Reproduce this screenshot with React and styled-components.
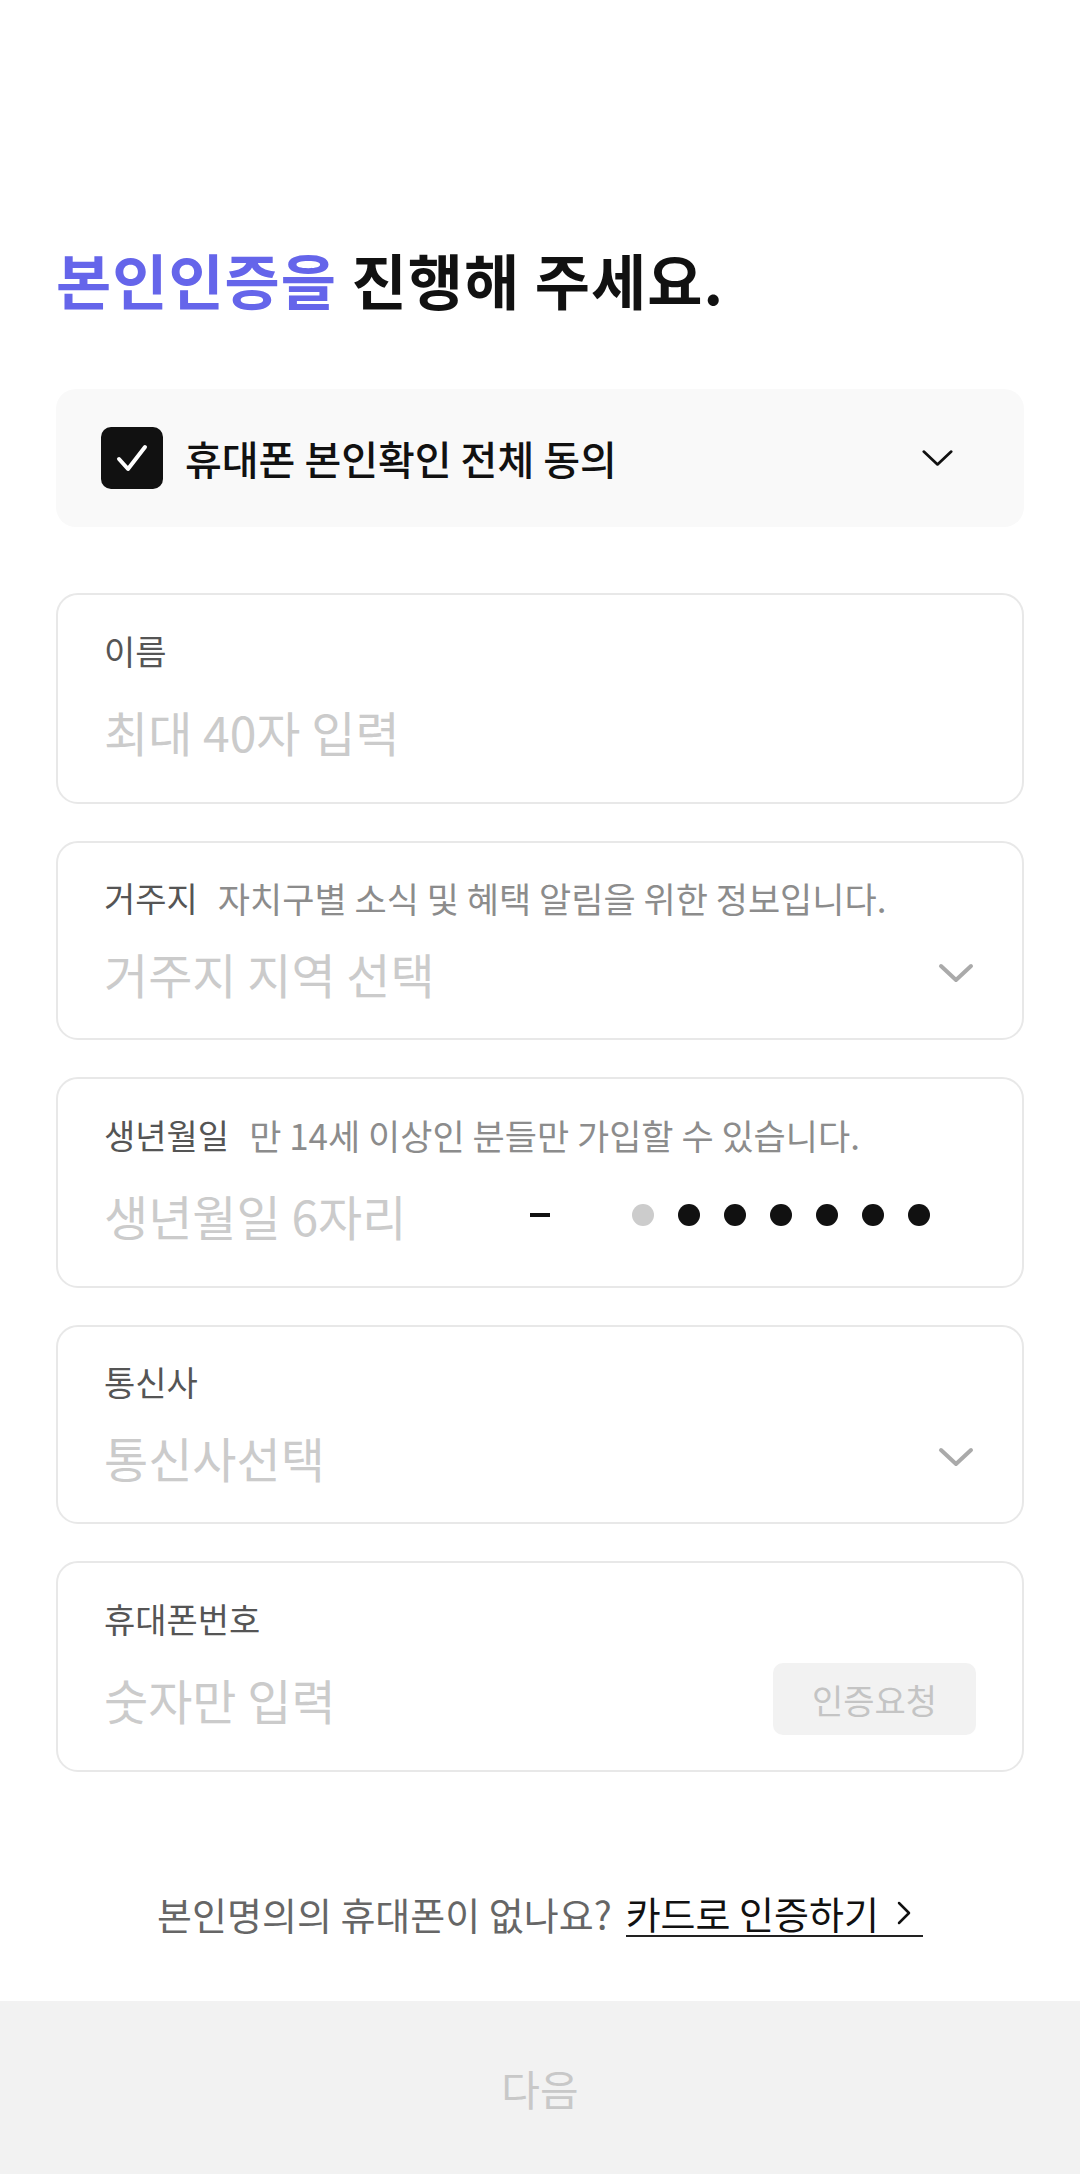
import React from "react";
import styled, { createGlobalStyle } from "styled-components";

const GlobalStyle = createGlobalStyle`
  * {
    box-sizing: border-box;
  }

  body {
    margin: 0;
    background: #fff;
    font-family: "Noto Sans CJK KR", "Noto Sans", sans-serif;
    color: #111;
  }
`;

const Page = styled.div`
  min-height: 100vh;
  display: flex;
  flex-direction: column;
`;

const Content = styled.main`
  padding: 243px 56px 0;
`;

const Title = styled.h1`
  margin: 0;
  font-size: 60px;
  line-height: 72px;
  font-weight: 700;
  letter-spacing: 1px;
  color: #111;
`;

const Accent = styled.span`
  color: #6565ea;
`;

const AgreeCard = styled.div`
  margin-top: 74px;
  height: 138px;
  display: flex;
  align-items: center;
  padding: 0 70px 0 45px;
  background: #f9f9f9;
  border-radius: 20px;
`;

const CheckBox = styled.span`
  width: 62px;
  height: 62px;
  flex: 0 0 62px;
  display: flex;
  align-items: center;
  justify-content: center;
  background: #111;
  border-radius: 10px;
`;

const AgreeText = styled.span`
  flex: 1;
  margin-left: 22px;
  font-size: 40px;
  font-weight: 500;
  line-height: 50px;
  color: #111;
`;

const FieldList = styled.div`
  margin-top: 66px;
  display: flex;
  flex-direction: column;
  gap: 37px;
`;

const Field = styled.div`
  border: 2px solid #e8e8e8;
  border-radius: 22px;
  padding: ${(p) => (p.$compact ? "37px 48px 35px 46px" : "38px 46px 41px 46px")};
  display: flex;
  flex-direction: column;
  gap: ${(p) => (p.$compact ? "27px" : "32px")};
`;

const LabelRow = styled.div`
  display: flex;
  align-items: center;
  height: 36px;
  white-space: nowrap;
`;

const Label = styled.span`
  font-size: 34px;
  line-height: 36px;
  color: #555;
`;

const Helper = styled.span`
  margin-left: 20px;
  font-size: 35px;
  line-height: 36px;
  color: #8c8c8c;
`;

const ValueRow = styled.div`
  display: flex;
  align-items: center;
  height: 60px;
`;

const Placeholder = styled.span`
  flex: ${(p) => (p.$fixed ? "0 0 426px" : "1")};
  font-size: 48px;
  line-height: 60px;
  color: #cbcbcb;
  white-space: nowrap;
`;

const Dash = styled.span`
  width: 20px;
  height: 4px;
  background: #111;
`;

const Dots = styled.div`
  display: flex;
  gap: 24px;
  margin-left: 82px;
`;

const Dot = styled.span`
  width: 22px;
  height: 22px;
  border-radius: 50%;
  background: ${(p) => (p.$muted ? "#cccccc" : "#111")};
`;

const RequestButton = styled.button`
  width: 203px;
  height: 72px;
  border: none;
  border-radius: 10px;
  background: #f2f2f2;
  color: #c4c4c4;
  font-family: inherit;
  font-size: 34px;
  padding: 0;
`;

const AltRow = styled.div`
  margin-top: 119px;
  display: flex;
  justify-content: center;
  align-items: center;
  font-size: 38px;
  line-height: 44px;
`;

const AltText = styled.span`
  color: #666;
`;

const AltLink = styled.a`
  margin-left: 14px;
  display: inline-flex;
  align-items: center;
  gap: 18px;
  padding-right: 12px;
  color: #111;
  text-decoration: none;
  border-bottom: 2px solid #222;
`;

const NextBar = styled.button`
  margin-top: auto;
  height: 173px;
  width: 100%;
  border: none;
  background: #f2f2f2;
  color: #c8c8c8;
  font-family: inherit;
  font-size: 42px;
`;

const Chevron = ({ color = "#111", width = 33, stroke = 3 }) => (
  <svg width={width} height="20" viewBox="0 0 36 20" fill="none">
    <path
      d="M3 3 L18 17 L33 3"
      stroke={color}
      strokeWidth={stroke}
      strokeLinecap="round"
      strokeLinejoin="round"
    />
  </svg>
);

const SelectField = ({ label, helper, placeholder }) => (
  <Field $compact>
    <LabelRow>
      <Label>{label}</Label>
      {helper && <Helper>{helper}</Helper>}
    </LabelRow>
    <ValueRow>
      <Placeholder>{placeholder}</Placeholder>
      <Chevron color="#aaaaaa" width={36} stroke={4} />
    </ValueRow>
  </Field>
);

export default function App() {
  return (
    <Page>
      <GlobalStyle />
      <Content>
        <Title>
          <Accent>본인인증을</Accent> 진행해 주세요.
        </Title>

        <AgreeCard>
          <CheckBox>
            <svg width="32" height="32" viewBox="0 0 32 32" fill="none">
              <path
                d="M3 17 L12 27 L29 5"
                stroke="#fff"
                strokeWidth="4"
                strokeLinecap="round"
                strokeLinejoin="round"
              />
            </svg>
          </CheckBox>
          <AgreeText>휴대폰 본인확인 전체 동의</AgreeText>
          <Chevron />
        </AgreeCard>

        <FieldList>
          <Field>
            <LabelRow>
              <Label>이름</Label>
            </LabelRow>
            <ValueRow>
              <Placeholder>최대 40자 입력</Placeholder>
            </ValueRow>
          </Field>

          <SelectField
            label="거주지"
            helper="자치구별 소식 및 혜택 알림을 위한 정보입니다."
            placeholder="거주지 지역 선택"
          />

          <Field>
            <LabelRow>
              <Label>생년월일</Label>
              <Helper>만 14세 이상인 분들만 가입할 수 있습니다.</Helper>
            </LabelRow>
            <ValueRow>
              <Placeholder $fixed>생년월일 6자리</Placeholder>
              <Dash />
              <Dots>
                {[0, 1, 2, 3, 4, 5, 6].map((i) => (
                  <Dot key={i} $muted={i === 0} />
                ))}
              </Dots>
            </ValueRow>
          </Field>

          <SelectField label="통신사" placeholder="통신사선택" />

          <Field>
            <LabelRow>
              <Label>휴대폰번호</Label>
            </LabelRow>
            <ValueRow>
              <Placeholder>숫자만 입력</Placeholder>
              <RequestButton>인증요청</RequestButton>
            </ValueRow>
          </Field>
        </FieldList>

        <AltRow>
          <AltText>본인명의의 휴대폰이 없나요?</AltText>
          <AltLink href="#">
            카드로 인증하기
            <svg width="14" height="24" viewBox="0 0 14 24" fill="none">
              <path
                d="M2 2 L12 12 L2 22"
                stroke="#111"
                strokeWidth="2.5"
                strokeLinecap="round"
                strokeLinejoin="round"
              />
            </svg>
          </AltLink>
        </AltRow>
      </Content>
      <NextBar>다음</NextBar>
    </Page>
  );
}
